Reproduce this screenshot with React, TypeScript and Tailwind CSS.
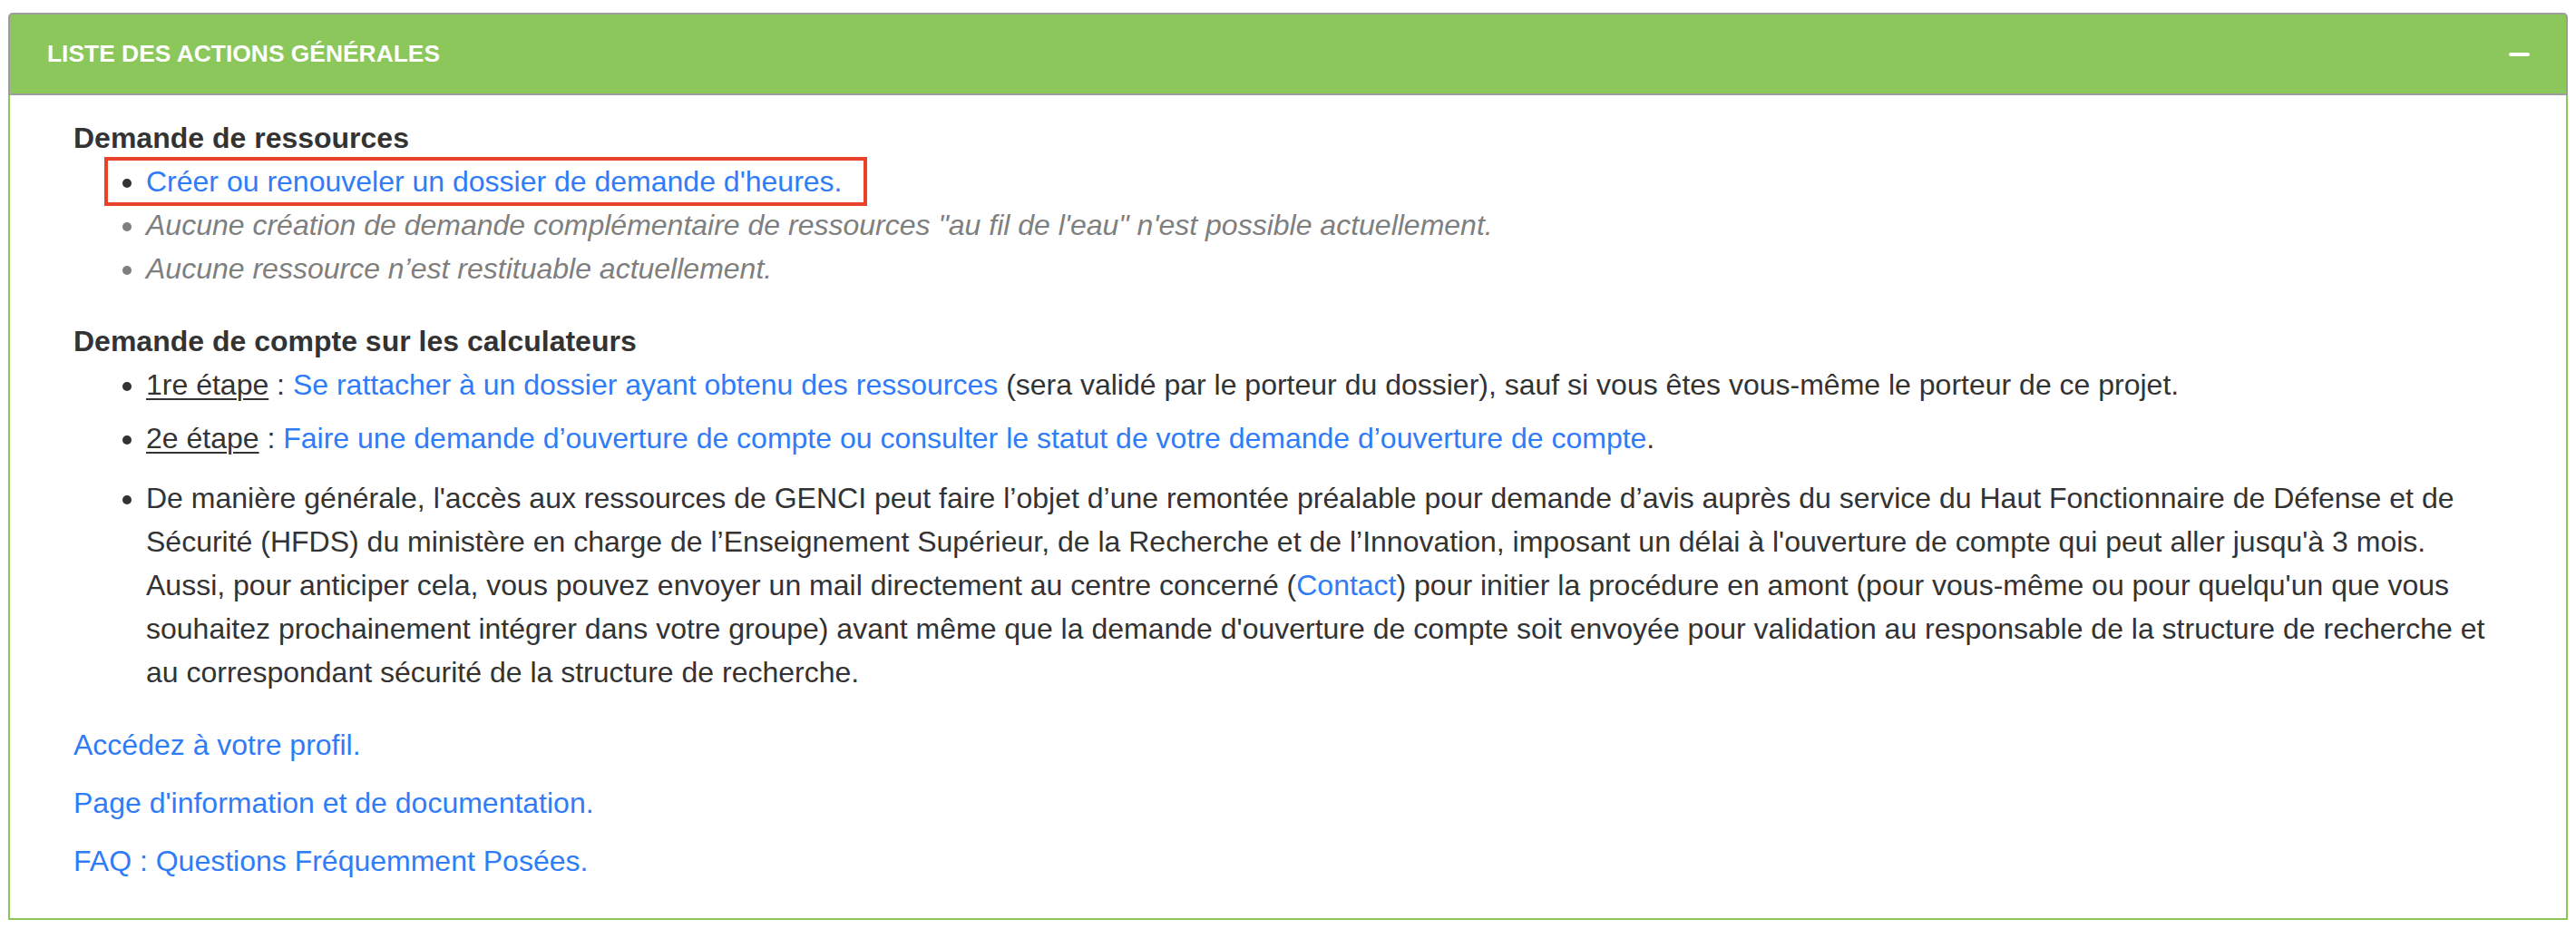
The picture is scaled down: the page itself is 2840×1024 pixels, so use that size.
import React from 'react';

const linkCls = 'text-[#2f7cf6] hover:underline';

export default function App() {
  return (
    <div className="min-h-screen bg-white font-['Liberation_Sans',Arial,sans-serif] text-[#333333]">
      <div className="mx-[9px] pt-[14px]">
        {/* Header */}
        <div className="flex h-[91px] items-center justify-between rounded-t-[5px] border-2 border-[#9d9d9d] bg-[#8bc75a] pl-[41px] pr-[40px]">
          <h1 className="text-[26.4px] font-bold uppercase text-white">Liste des actions générales</h1>
          <button className="flex h-[24px] w-[23px] items-center justify-center">
            <span className="block h-[4px] w-[23px] rounded-full bg-white" />
          </button>
        </div>

        {/* Body */}
        <div className="border-2 border-t-0 border-[#8bc75a] pb-[23px] pl-[70px] pr-[84px] pt-[23px] text-[32px] leading-[48px]">
          <h2 className="font-bold">Demande de ressources</h2>
          <ul className="mb-[32px] list-disc pl-[80px]">
            <li className="relative">
              <a href="#" className={linkCls}>
                Créer ou renouveler un dossier de demande d'heures.
              </a>
              <span className="pointer-events-none absolute left-[-46px] top-[-3px] h-[54px] w-[841px] border-4 border-[#e8432a]" />
            </li>
            <li className="italic text-[#7f7f7f]">
              Aucune création de demande complémentaire de ressources "au fil de l'eau" n'est possible actuellement.
            </li>
            <li className="italic text-[#7f7f7f]">Aucune ressource n’est restituable actuellement.</li>
          </ul>

          <h2 className="font-bold">Demande de compte sur les calculateurs</h2>
          <ul className="mb-[32px] list-disc pl-[80px]">
            <li className="mb-[11px]">
              <span className="underline decoration-2 underline-offset-[4px]">1re étape</span> :{' '}
              <a href="#" className={linkCls}>
                Se rattacher à un dossier ayant obtenu des ressources
              </a>{' '}
              (sera validé par le porteur du dossier), sauf si vous êtes vous-même le porteur de ce projet.
            </li>
            <li className="mb-[18px]">
              <span className="underline decoration-2 underline-offset-[4px]">2e étape</span> :{' '}
              <a href="#" className={linkCls}>
                Faire une demande d’ouverture de compte ou consulter le statut de votre demande d’ouverture de compte
              </a>
              .
            </li>
            <li>
              De manière générale, l'accès aux ressources de GENCI peut faire l’objet d’une remontée préalable pour
              demande d’avis auprès du service du Haut Fonctionnaire de Défense et de Sécurité (HFDS) du ministère en
              charge de l’Enseignement Supérieur, de la Recherche et de l’Innovation, imposant un délai à l'ouverture de
              compte qui peut aller jusqu'à 3 mois.
              <br />
              Aussi, pour anticiper cela, vous pouvez envoyer un mail directement au centre concerné (
              <a href="#" className={linkCls}>
                Contact
              </a>
              ) pour initier la procédure en amont (pour vous-même ou pour quelqu'un que vous souhaitez prochainement
              intégrer dans votre groupe) avant même que la demande d'ouverture de compte soit envoyée pour validation
              au responsable de la structure de recherche et au correspondant sécurité de la structure de recherche.
            </li>
          </ul>

          <p className="mb-[16px]">
            <a href="#" className={linkCls}>
              Accédez à votre profil.
            </a>
          </p>
          <p className="mb-[16px]">
            <a href="#" className={linkCls}>
              Page d'information et de documentation.
            </a>
          </p>
          <p className="mb-[16px]">
            <a href="#" className={linkCls}>
              FAQ : Questions Fréquemment Posées.
            </a>
          </p>
        </div>
      </div>
    </div>
  );
}
